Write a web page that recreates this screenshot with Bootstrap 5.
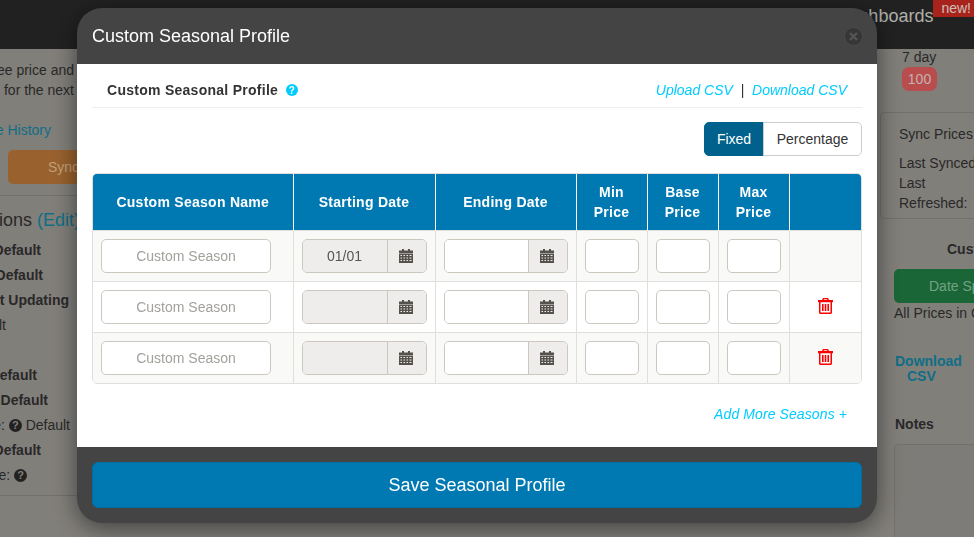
<!DOCTYPE html>
<html lang="en">
<head>
    <meta charset="UTF-8">
    <meta name="viewport" content="width=device-width, initial-scale=1.0">
    <title>Custom Seasonal Profile</title>
    <link href="https://cdn.jsdelivr.net/npm/bootstrap@5.3.0/dist/css/bootstrap.min.css" rel="stylesheet">
    <style>
        html, body {
            height: 537px;
            overflow: hidden;
        }
        body {
            font-family: "Liberation Sans", Arial, sans-serif;
            font-size: 14px;
            line-height: 20px;
            color: #333;
            background-color: #a29f99;
        }
        /* page behind the modal */
        .top-strip {
            height: 49px;
            background-color: #2a2a2a;
            color: #dbdbd4;
            font-size: 18px;
        }
        .top-new {
            background-color: #d42c25;
            color: #ffebe1;
            font-size: 14px;
            line-height: 17px;
            height: 17px;
            padding: 0 3px 0 8px;
        }
        .top-dash { padding-top: 6px; }
        .back-left {
            width: 77px;
            height: 488px;
            overflow: hidden;
            white-space: nowrap;
        }
        .back-right {
            width: 97px;
            height: 488px;
            overflow: hidden;
            white-space: nowrap;
        }
        .back-row {
            display: flex;
            justify-content: flex-end;
        }
        .back-row > span { flex: none; }
        .back-tall { height: 25px; line-height: 25px; }
        .end-3 { padding-right: 3px; }
        .end-7 { padding-right: 7px; }
        .end-8 { padding-right: 8px; }
        .end-26 { padding-right: 26px; }
        .end-29 { padding-right: 29px; }
        .end-34 { padding-right: 34px; }
        .end-36 { padding-right: 36px; }
        .end-40 { padding-right: 40px; }
        .end-50 { padding-right: 50px; }
        .end-71 { padding-right: 71px; }
        .gap-11 { margin-top: 11px; }
        .back-link { color: #148aa8; }
        .back-opts { font-size: 18px; margin: 14px -3px 0 0; }
        .back-rule { border-top: 1px solid #8f8c87; }
        .rule-a { margin-top: 11px; }
        .rule-b { margin-top: 7px; }
        .rows-start { margin-top: 8px; }
        .history-row { margin-top: 20px; }
        .help-dot {
            display: inline-block;
            width: 13px;
            height: 13px;
            line-height: 13px;
            border-radius: 50%;
            background: #2b2b2b;
            color: #a29f99;
            font-size: 11px;
            font-weight: bold;
            text-align: center;
            vertical-align: 1px;
        }
        .sync-btn {
            background: #c07a3a;
            color: #f0c896;
            height: 34px;
            line-height: 34px;
            margin: 10px 0 0 8px;
            padding-left: 40px;
            border-radius: 5px 0 0 5px;
        }
        .back-day { margin: -2px 0 0 25px; }
        .back-badge {
            display: block;
            background: #e86060;
            color: #f7dcdc;
            margin-left: 25px;
            width: 35px;
            height: 24px;
            line-height: 24px;
            text-align: center;
            border-radius: 7px;
        }
        .back-panel {
            margin: 21px 0 0 3px;
            height: 107px;
            border: 1px solid #8f8c87;
            border-right: 0;
            border-radius: 5px 0 0 5px;
            padding: 11px 0 0 18px;
        }
        .panel-gap { margin-top: 9px; }
        .back-head { margin: 20px 0 0 70px; font-weight: bold; }
        .date-btn {
            background: #228044;
            color: #8fcaa6;
            height: 34px;
            line-height: 34px;
            margin: 10px 0 0 17px;
            padding-left: 35px;
            border-radius: 5px 0 0 5px;
        }
        .back-note { margin-left: 17px; }
        .back-csv {
            margin: 31px 0 0 18px;
            line-height: 15px;
            font-weight: bold;
        }
        .csv-second { margin-left: 12px; }
        .notes-label { margin: 30px 0 0 18px; font-weight: bold; }
        .notes-box {
            margin: 10px 0 0 17px;
            height: 120px;
            border: 1px solid #8f8c87;
            border-right: 0;
            border-radius: 5px 0 0 5px;
            background: #9e9b96;
        }
        .back-cover {
            position: fixed;
            inset: 0;
            background: rgba(0, 0, 0, .2);
        }
        /* the modal */
        .season-modal {
            position: fixed;
            left: 77px;
            top: 8px;
            width: 800px;
            height: 515px;
            background: #444;
            border-radius: 25px;
            overflow: hidden;
            box-shadow: 0 5px 25px rgba(0, 0, 0, .5);
        }
        .season-head {
            height: 56px;
            padding: 0 14px 0 15px;
            color: #fff;
            font-size: 18px;
        }
        .close-dot {
            width: 19px;
            height: 19px;
            border-radius: 50%;
            background: #363636;
            border: 1px solid #4a4a4a;
        }
        .season-body {
            height: 383px;
            background: #fff;
            padding: 0 15px;
        }
        .season-title-row {
            height: 44px;
            margin-bottom: 14px;
            padding: 9px 15px 0;
            border-bottom: 1px solid #eee;
        }
        .season-title {
            font-weight: bold;
            font-size: 14px;
            letter-spacing: .27px;
        }
        .csv-link, .more-link {
            color: #00ccff;
            font-style: italic;
            text-decoration: none;
        }
        .more-link { letter-spacing: .1px; }
        .fixed-toggle .btn {
            font-size: 14px;
            height: 34px;
            line-height: 20px;
            padding: 6px 0;
            width: 99px;
            border-color: #ccc;
            color: #333;
            background: #fff;
            border-radius: 5px;
        }
        .fixed-toggle .btn.is-active {
            width: 60px;
            background: #00628c;
            border-color: #00628c;
            color: #fff;
        }
        .season-table-wrap {
            margin-top: 17px;
            width: 770px;
            border: 1px solid #e0dfdb;
            border-radius: 5px;
            overflow: hidden;
        }
        .season-table {
            table-layout: fixed;
            width: 768px;
            margin: 0;
            border-collapse: collapse;
            background: #f9f9f7;
        }
        .col-name { width: 200px; }
        .col-date { width: 142px; }
        .col-end { width: 141px; }
        .col-price { width: 71px; }
        .col-tool { width: 72px; }
        .season-table th {
            background: #0079b2;
            color: #fff;
            height: 56px;
            padding: 0 8px;
            font-size: 14px;
            line-height: 20px;
            letter-spacing: .27px;
            text-align: center;
            vertical-align: middle;
            border-left: 1px solid #fff;
        }
        .season-table td {
            height: 51px;
            padding: 0 8px;
            vertical-align: middle;
            border-left: 1px solid #e0dfdb;
            border-top: 1px solid #e0dfdb;
        }
        .season-table th:first-child,
        .season-table td:first-child { border-left: 0; }
        .season-table tr.is-plain td { background: #fff; }
        .season-input {
            display: block;
            width: 100%;
            height: 34px;
            border: 1px solid #ccc8c0;
            border-radius: 5px;
            background: #fff;
            font-size: 14px;
            text-align: center;
            color: #555;
            padding: 0 6px;
            outline: 0;
        }
        .name-input { width: 170px; }
        .season-input::placeholder { color: #a3a19c; opacity: 1; }
        .date-group {
            display: flex;
            height: 34px;
            border: 1px solid #ccc8c0;
            border-radius: 5px;
            overflow: hidden;
        }
        .date-group input {
            width: 85px;
            flex: 0 0 85px;
            border: 0;
            border-right: 1px solid #ccc8c0;
            background: #fff;
            font-size: 14px;
            text-align: center;
            color: #555;
            padding: 0;
            outline: 0;
        }
        .date-group.is-end input {
            width: 84px;
            flex-basis: 84px;
        }
        .date-group input:disabled { background: #eeedeb; }
        .date-add {
            flex: 1;
            background: #eeedeb;
            padding-right: 1px;
            display: flex;
            align-items: center;
            justify-content: center;
        }
        .trash-ico {
            display: block;
            margin: -2px auto 0;
        }
        .more-row { margin-top: 20px; padding-right: 15px; }
        .season-foot { padding: 15px; }
        .save-btn {
            display: block;
            width: 770px;
            height: 46px;
            background: #0079b2;
            border: 1px solid #006f9f;
            border-radius: 6px;
            color: #fff;
            font-size: 18px;
        }
    </style>
</head>
<body>
    <svg width="0" height="0" class="d-block">
        <symbol id="ico-cal" viewBox="0 0 14 14">
            <path fill="#55524d" fill-rule="evenodd" d="M3 0h2v1.500h4V0h2v1.500h3V14H0V1.500h3zM0 4.200v.6h14v-.6zM1.500 6v1h1.500V6zm3 0v1H6V6zm3 0v1h1.500V6zm3 0v1h2V6zM1.500 8.500v1h1.500v-1zm3 0v1H6v-1zm3 0v1h1.500v-1zm3 0v1h2v-1zM1.500 11v1h1.500v-1zm3 0v1H6v-1zm3 0v1h1.500v-1zm3 0v1h2v-1z"/>
        </symbol>
        <symbol id="ico-trash" viewBox="0 0 15 16">
            <path fill="#ff0000" fill-rule="evenodd" d="M5 0h5l1 2h4v2.200h-1v10.300c0 .8-.7 1.500-1.500 1.500h-10C1.700 16 1 15.300 1 14.500V4.200H0V2h4zM6 1.300 5.600 2h3.800L9 1.300zM2.500 4.200v10c0 .2.100.3.300.3h9.400c.2 0 .3-.1.300-.3v-10zM4 6h1.600v7H4zm2.700 0h1.600v7H6.700zm2.700 0H11v7H9.400z"/>
        </symbol>
    </svg>

    <div class="top-strip d-flex justify-content-end">
        <span class="top-dash">Dashboards</span>
        <span class="top-new">new!</span>
    </div>
    <div class="d-flex justify-content-between">
        <div class="back-left">
            <div class="back-row end-3 gap-11"><span>see price and</span></div>
            <div class="back-row end-3"><span>for the next</span></div>
            <div class="back-row end-26 history-row"><span class="back-link">Price History</span></div>
            <div class="sync-btn">Sync</div>
            <div class="back-rule rule-a"></div>
            <div class="back-row back-opts"><span>Options <span class="back-link">(Edit)</span></span></div>
            <div class="back-row back-tall fw-bold end-36 rows-start"><span>Default</span></div>
            <div class="back-row back-tall fw-bold end-34"><span>Default</span></div>
            <div class="back-row back-tall fw-bold end-8"><span>Not Updating</span></div>
            <div class="back-row back-tall end-71"><span>Default</span></div>
            <div class="back-tall"></div>
            <div class="back-row back-tall fw-bold end-40"><span>Default</span></div>
            <div class="back-row back-tall fw-bold end-29"><span>Default</span></div>
            <div class="back-row back-tall end-7"><span>Price: <span class="help-dot">?</span> Default</span></div>
            <div class="back-row back-tall fw-bold end-36"><span>Default</span></div>
            <div class="back-row back-tall end-50"><span>Sale: <span class="help-dot">?</span></span></div>
            <div class="back-rule rule-b"></div>
        </div>
        <div class="back-right">
            <div class="back-day">7 day</div>
            <div class="back-badge">100</div>
            <div class="back-panel">
                <div>Sync Prices</div>
                <div class="panel-gap">Last Synced</div>
                <div>Last</div>
                <div>Refreshed:</div>
            </div>
            <div class="back-head">Custom</div>
            <div class="date-btn">Date Specific</div>
            <div class="back-note">All Prices in CAD</div>
            <div class="back-link back-csv">Download<br><span class="csv-second">CSV</span></div>
            <div class="notes-label">Notes</div>
            <div class="notes-box"></div>
        </div>
    </div>
    <div class="back-cover"></div>

    <div class="season-modal">
        <div class="season-head d-flex align-items-center justify-content-between">
            <span>Custom Seasonal Profile</span>
            <span class="close-dot d-flex align-items-center justify-content-center">
                <svg width="9" height="9" viewBox="0 0 9 9"><path d="M1 1l7 7M8 1L1 8" stroke="#555" stroke-width="2.400"/></svg>
            </span>
        </div>
        <div class="season-body">
            <div class="season-title-row d-flex align-items-center justify-content-between">
                <div class="season-title d-flex align-items-center gap-2">
                    <span>Custom Seasonal Profile</span>
                    <svg width="12" height="12" viewBox="0 0 12 12"><circle cx="6" cy="6" r="6" fill="#00ccff"/><text x="6" y="9.500" text-anchor="middle" font-size="10" font-weight="bold" fill="#fff" font-family="Liberation Sans">?</text></svg>
                </div>
                <div><a class="csv-link" href="#">Upload CSV</a>&nbsp; | &nbsp;<a class="csv-link" href="#">Download CSV</a></div>
            </div>
            <div class="d-flex justify-content-end">
                <div class="btn-group fixed-toggle">
                    <button type="button" class="btn is-active">Fixed</button>
                    <button type="button" class="btn">Percentage</button>
                </div>
            </div>
            <div class="season-table-wrap">
                <table class="season-table">
                    <colgroup>
                        <col class="col-name"><col class="col-date"><col class="col-end"><col class="col-price"><col class="col-price"><col class="col-price"><col class="col-tool">
                    </colgroup>
                    <thead>
                        <tr>
                            <th>Custom Season Name</th>
                            <th>Starting Date</th>
                            <th>Ending Date</th>
                            <th>Min<br>Price</th>
                            <th>Base<br>Price</th>
                            <th>Max<br>Price</th>
                            <th></th>
                        </tr>
                    </thead>
                    <tbody id="season-rows"></tbody>
                </table>
            </div>
            <div class="text-end more-row"><a class="more-link" href="#">Add More Seasons +</a></div>
        </div>
        <div class="season-foot">
            <button type="button" class="save-btn">Save Seasonal Profile</button>
        </div>
    </div>

    <script src="https://cdn.jsdelivr.net/npm/bootstrap@5.3.0/dist/js/bootstrap.bundle.min.js"></script>
    <script>
        // Build the three season rows
        const calIcon = '<span class="date-add"><svg width="14" height="14"><use href="#ico-cal"/></svg></span>';
        const rows = [
            { start: "01/01", trash: false, plain: false },
            { start: "", trash: true, plain: true },
            { start: "", trash: true, plain: false }
        ];
        document.getElementById("season-rows").innerHTML = rows.map(row => `
            <tr class="${row.plain ? "is-plain" : ""}">
                <td><input class="season-input name-input" placeholder="Custom Season"></td>
                <td><div class="date-group"><input value="${row.start}" disabled>${calIcon}</div></td>
                <td><div class="date-group is-end"><input>${calIcon}</div></td>
                <td><input class="season-input"></td>
                <td><input class="season-input"></td>
                <td><input class="season-input"></td>
                <td>${row.trash ? '<svg class="trash-ico" width="15" height="16"><use href="#ico-trash"/></svg>' : ""}</td>
            </tr>`).join("");
    </script>
</body>
</html>
